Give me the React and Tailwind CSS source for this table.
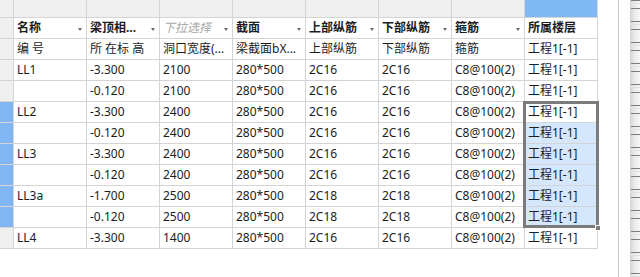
import React from "react";

const FONT = { fontFamily: '"Noto Sans", "Noto Sans CJK SC", sans-serif' };

const header1 = [
  { t: "名称", b: true, arrow: true },
  { t: "梁顶相...", b: true, arrow: true },
  { t: "下拉选择", ph: true, arrow: true },
  { t: "截面", b: true, arrow: true },
  { t: "上部纵筋", b: true, arrow: true },
  { t: "下部纵筋", b: true, arrow: true },
  { t: "箍筋", b: true, arrow: true },
  { t: "所属楼层", b: true, arrow: false },
];

const header2 = ["编 号", "所 在标 高", "洞口宽度(...", "梁截面bX...", "上部纵筋", "下部纵筋", "箍筋", "工程1[-1]"];

const data = [
  ["LL1", "-3.300", "2100", "280*500", "2C16", "2C16", "C8@100(2)", "工程1[-1]"],
  ["", "-0.120", "2100", "280*500", "2C16", "2C16", "C8@100(2)", "工程1[-1]"],
  ["LL2", "-3.300", "2400", "280*500", "2C16", "2C16", "C8@100(2)", "工程1[-1]"],
  ["", "-0.120", "2400", "280*500", "2C16", "2C16", "C8@100(2)", "工程1[-1]"],
  ["LL3", "-3.300", "2400", "280*500", "2C16", "2C16", "C8@100(2)", "工程1[-1]"],
  ["", "-0.120", "2400", "280*500", "2C16", "2C16", "C8@100(2)", "工程1[-1]"],
  ["LL3a", "-1.700", "2500", "280*500", "2C18", "2C18", "C8@100(2)", "工程1[-1]"],
  ["", "-0.120", "2500", "280*500", "2C18", "2C18", "C8@100(2)", "工程1[-1]"],
  ["LL4", "-3.300", "1400", "280*500", "2C16", "2C16", "C8@100(2)", "工程1[-1]"],
];

function Arrow() {
  return (
    <span className="absolute right-[4px] top-[10px] w-0 h-0 border-l-[2px] border-r-[2px] border-t-[3px] border-l-transparent border-r-transparent border-t-[#6a6a6a]" />
  );
}

function Strip() {
  const lines = [];
  for (let k = 0; k < 14; k++) {
    lines.push(<rect key={"a" + k} x="1" y={21 * k} width="9" height="1" fill="#7c7c7c" />);
    lines.push(<rect key={"b" + k} x="1" y={21 * k + 8} width="9" height="1" fill="#7c7c7c" />);
    lines.push(<rect key={"c" + k} x="1" y={21 * k + 3} width="9" height="1" fill="#e2e2e2" />);
  }
  return (
    <svg width="10" height="277" viewBox="0 0 10 277" className="block">
      <defs>
        <linearGradient id="g" x1="0" x2="1" y1="0" y2="0">
          <stop offset="0" stopColor="#d4d4d4" />
          <stop offset="0.4" stopColor="#e8e8e8" />
          <stop offset="1" stopColor="#f7f7f7" />
        </linearGradient>
      </defs>
      <rect x="0" y="0" width="10" height="277" fill="url(#g)" />
      {lines}
    </svg>
  );
}

export default function App() {
  const rows = [
    { kind: "h1" },
    { kind: "h2" },
    ...data.map((d, i) => ({ kind: "d", d, i })),
  ];
  return (
    <div className="w-[640px] h-[277px] bg-white flex overflow-hidden text-[12px] text-[#1c1c1c]" style={FONT}>
      <div className="relative w-[598px] shrink-0">
        {/* top header row */}
        <div className="flex h-[18px]">
          <div className="w-[14px] h-[18px] bg-[#efefef] border-r border-b border-[#d4d4d4]" />
          {Array.from({ length: 8 }).map((_, c) => (
            <div
              key={c}
              className={
                c === 7
                  ? "w-[73px] h-[18px] bg-[#80b8f6] border-r border-b border-[#d4d4d4]"
                  : "w-[73px] h-[18px] bg-[#efefef] border-r border-b border-[#d4d4d4]"
              }
            />
          ))}
        </div>
        {rows.map((r, ri) => {
          const dataIdx = ri - 2;
          const rowBlue = dataIdx >= 2 && dataIdx <= 7;
          let cells;
          if (r.kind === "h1") cells = header1;
          else if (r.kind === "h2") cells = header2.map((t) => ({ t }));
          else cells = r.d.map((t) => ({ t }));
          return (
            <div key={ri} className="flex h-[21px]">
              <div
                className={
                  rowBlue
                    ? "w-[14px] h-[21px] bg-[#80b6f3] border-r border-b border-[#d4d4d4]"
                    : "w-[14px] h-[21px] bg-[#efefef] border-r border-b border-[#d4d4d4]"
                }
              />
              {cells.map((cell, c) => {
                const selBg = c === 7 && dataIdx >= 3 && dataIdx <= 7;
                return (
                  <div
                    key={c}
                    className={
                      "relative w-[73px] h-[21px] border-r border-b border-[#d4d4d4] pl-[3px] flex items-center whitespace-nowrap overflow-hidden " +
                      (selBg ? "bg-[#d5e7fc]" : "bg-white")
                    }
                  >
                    <span
                      className={
                        cell.ph
                          ? "italic text-[#a8a8a8] leading-none"
                          : cell.b
                          ? "font-bold leading-none"
                          : "leading-none"
                      }
                    >
                      {cell.t}
                    </span>
                    {cell.arrow ? <Arrow /> : null}
                  </div>
                );
              })}
            </div>
          );
        })}
        {/* selection box */}
        <div className="absolute left-[523px] top-[101px] w-[76px] h-[127px] border-[3px] border-[#7b7b7b] pointer-events-none" />
        <div className="absolute left-[595px] top-[225px] w-[6px] h-[6px] bg-[#7b7b7b] border border-white pointer-events-none" />
      </div>
      <div className="w-[20px] shrink-0" />
      <div className="w-px h-[277px] bg-[#c9c9c9] shrink-0" />
      <div className="w-[11px] shrink-0" />
      <div className="w-[10px] shrink-0">
        <Strip />
      </div>
    </div>
  );
}
